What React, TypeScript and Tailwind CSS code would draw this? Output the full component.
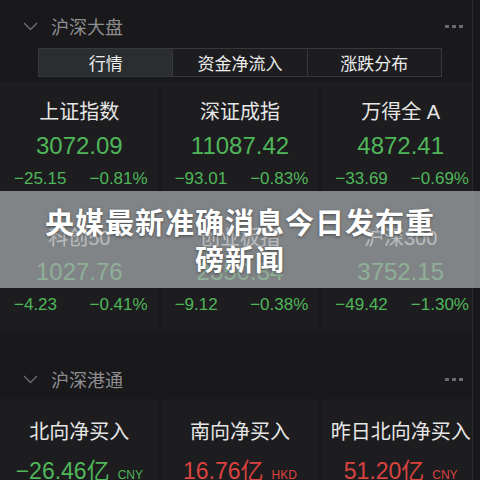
import React from 'react';

type Quote = { name: string; value: string; change: string; pct: string };

const indices: Quote[] = [
  { name: '上证指数', value: '3072.09', change: '−25.15', pct: '−0.81%' },
  { name: '深证成指', value: '11087.42', change: '−93.01', pct: '−0.83%' },
  { name: '万得全 A', value: '4872.41', change: '−33.69', pct: '−0.69%' },
  { name: '科创50', value: '1027.76', change: '−4.23', pct: '−0.41%' },
  { name: '创业板指', value: '2350.84', change: '−9.12', pct: '−0.38%' },
  { name: '沪深300', value: '3752.15', change: '−49.42', pct: '−1.30%' },
];

const flows = [
  { name: '北向净买入', value: '−26.46亿', unit: 'CNY', up: false },
  { name: '南向净买入', value: '16.76亿', unit: 'HKD', up: true },
  { name: '昨日北向净买入', value: '51.20亿', unit: 'CNY', up: true },
];

const cjk = "font-['Noto_Sans_CJK_SC',sans-serif]";
const num = "font-['Liberation_Sans','Noto_Sans_CJK_SC',sans-serif]";

function SectionHeader({ title }: { title: string }) {
  return (
    <div className="flex h-[40px] items-center pl-[23px] pr-[17px]">
      <svg width="15" height="9" viewBox="0 0 15 9" className="mr-[13px]">
        <path d="M1 1l6.5 6.5L14 1" fill="none" stroke="#6f6f72" strokeWidth="1.3" />
      </svg>
      <span className={`${cjk} text-[18px] text-[#8e8e91]`}>{title}</span>
      <div className="ml-auto flex gap-[3px]">
        <span className="h-[3px] w-[4px] bg-[#6b6b6e]" />
        <span className="h-[3px] w-[4px] bg-[#6b6b6e]" />
        <span className="h-[3px] w-[4px] bg-[#6b6b6e]" />
      </div>
    </div>
  );
}

function IndexCard({ q }: { q: Quote }) {
  return (
    <div className="flex h-[124px] flex-col items-center bg-[#1d1d1f] pt-[18px]">
      <div className={`${num} h-[24px] text-[20px] leading-[24px] text-[#e6e6e6]`}>{q.name}</div>
      <div className={`${num} mt-[8px] h-[28px] text-[24px] leading-[28px] text-[#4fb65a]`}>{q.value}</div>
      <div className={`${num} mt-[9px] flex h-[20px] w-full justify-between pl-[14px] pr-[11px] text-[17px] leading-[20px] text-[#4fb65a]`}>
        <span>{q.change}</span>
        <span>{q.pct}</span>
      </div>
    </div>
  );
}

export default function App() {
  return (
    <div className="relative h-[480px] w-[480px] overflow-hidden bg-[#19191b]">
      <div className="pt-[6px]">
        <SectionHeader title="沪深大盘" />
        <div className="mx-[38px] mt-[2px] flex h-[29px] border border-[#38383b]">
          {['行情', '资金净流入', '涨跌分布'].map((t, i) => (
            <div
              key={t}
              className={`${cjk} flex flex-1 items-center justify-center text-[17px] text-[#ececec] ${
                i === 0 ? 'bg-[#2b2e31]' : 'border-l border-[#38383b] bg-[#1d1d1f]'
              }`}
            >
              {t}
            </div>
          ))}
        </div>
        <div className="mt-[5px] grid grid-cols-3 gap-[2px]">
          {indices.map((q) => (
            <IndexCard key={q.name} q={q} />
          ))}
        </div>
        <div className="mt-[27px]">
          <SectionHeader title="沪深港通" />
        </div>
        <div className="grid grid-cols-3 gap-[2px]">
          {flows.map((f) => (
            <div key={f.name} className="flex h-[90px] flex-col items-center bg-[#1d1d1f] pt-[20px]">
              <div className={`${cjk} h-[24px] text-[20px] leading-[24px] text-[#e6e6e6]`}>{f.name}</div>
              <div className="mt-[14px] flex items-baseline gap-[8px]">
                <span className={`${num} text-[23px] leading-[28px] ${f.up ? 'text-[#d9433f]' : 'text-[#4fb65a]'}`}>
                  {f.value}
                </span>
                <span className={`${num} text-[12px] ${f.up ? 'text-[#d9433f]' : 'text-[#4fb65a]'}`}>{f.unit}</span>
              </div>
            </div>
          ))}
        </div>
      </div>

      <div className="absolute right-0 top-0 h-full w-[8px] border-l border-[#2a2a2d] bg-[#18181a]" />

      <div className="absolute left-0 top-[191px] flex h-[97px] w-full items-center justify-center bg-[rgba(167,172,175,0.72)] px-[40px]">
        <p
          className={`${cjk} text-center text-[29px] font-bold leading-[37px] tracking-[1px] text-white [text-shadow:0_1px_3px_rgba(0,0,0,0.45)]`}
        >
          央媒最新准确消息今日发布重磅新闻
        </p>
      </div>
    </div>
  );
}
